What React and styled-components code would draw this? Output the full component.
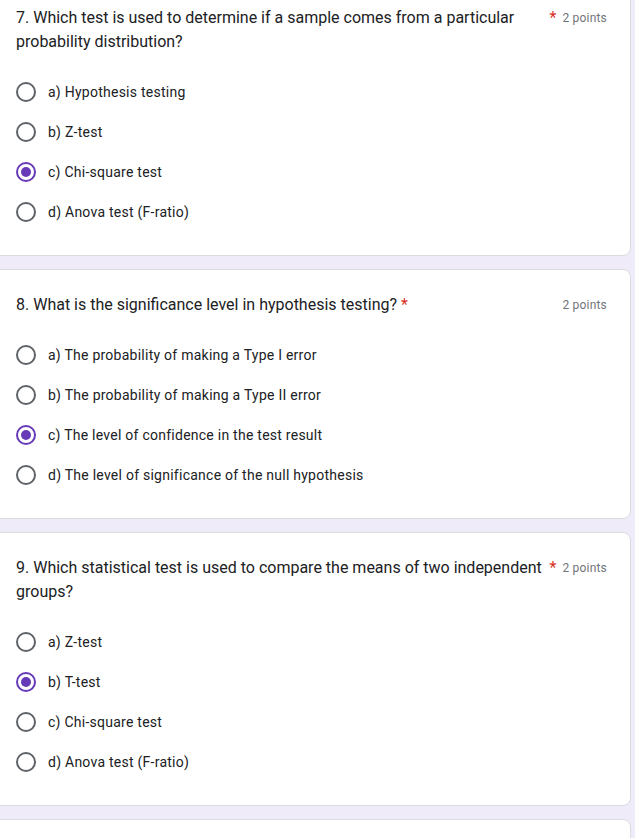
import React from "react";
import styled, { createGlobalStyle } from "styled-components";

const GlobalStyle = createGlobalStyle`
  html, body {
    margin: 0;
    padding: 0;
    background: #f0ebf8;
    overflow: hidden;
  }
  body {
    font-family: Roboto, "Liberation Sans", Arial, sans-serif;
    color: #202124;
  }
`;

const Page = styled.div`
  margin-top: -18px;
  padding-right: 4px;
  display: flex;
  flex-direction: column;
  gap: 13px;
`;

const Card = styled.div`
  margin-left: -10px;
  background: #fff;
  border: 1px solid #dadce0;
  border-radius: 8px;
  padding: 23px 23px 23px 25px;
  min-height: ${(p) => (p.$empty ? "60px" : "auto")};
`;

const Header = styled.div`
  display: flex;
  align-items: flex-start;
  margin-bottom: 18px;
`;

const TitleWrap = styled.div`
  display: flex;
  align-items: flex-start;
  flex: 0 1 auto;
  min-width: 0;
`;

const Title = styled.div`
  font-size: 16px;
  line-height: 24px;
  letter-spacing: 0;
  color: #202124;
`;

const Asterisk = styled.span`
  flex-shrink: 0;
  margin-left: 4px;
  font-size: 16px;
  line-height: 24px;
  color: #d93025;
`;

const Points = styled.span`
  flex-shrink: 0;
  margin-left: auto;
  padding-left: 6px;
  font-size: 12px;
  line-height: 24px;
  letter-spacing: 0.2px;
  color: #70757a;
  white-space: nowrap;
`;

const Options = styled.div`
  display: flex;
  flex-direction: column;
`;

const Option = styled.label`
  display: flex;
  align-items: center;
  gap: 12px;
  height: 40px;
  font-size: 14px;
  letter-spacing: 0.25px;
  color: #202124;
`;

const Radio = styled.span`
  box-sizing: border-box;
  width: 20px;
  height: 20px;
  border-radius: 50%;
  border: 2px solid ${(p) => (p.$checked ? "#673ab7" : "#5f6368")};
  display: flex;
  align-items: center;
  justify-content: center;
  flex-shrink: 0;

  &::after {
    content: "";
    width: 10px;
    height: 10px;
    border-radius: 50%;
    background: #673ab7;
    display: ${(p) => (p.$checked ? "block" : "none")};
  }
`;

const questions = [
  {
    title:
      "7. Which test is used to determine if a sample comes from a particular probability distribution?",
    options: [
      "a) Hypothesis testing",
      "b) Z-test",
      "c) Chi-square test",
      "d) Anova test (F-ratio)",
    ],
    checked: 2,
  },
  {
    title: "8. What is the significance level in hypothesis testing?",
    options: [
      "a) The probability of making a Type I error",
      "b) The probability of making a Type II error",
      "c) The level of confidence in the test result",
      "d) The level of significance of the null hypothesis",
    ],
    checked: 2,
  },
  {
    title:
      "9. Which statistical test is used to compare the means of two independent groups?",
    options: ["a) Z-test", "b) T-test", "c) Chi-square test", "d) Anova test (F-ratio)"],
    checked: 1,
  },
];

function Question({ q }) {
  return (
    <Card>
      <Header>
        <TitleWrap>
          <Title>{q.title}</Title>
          <Asterisk>*</Asterisk>
        </TitleWrap>
        <Points>2 points</Points>
      </Header>
      <Options>
        {q.options.map((opt, i) => (
          <Option key={opt}>
            <Radio $checked={i === q.checked} />
            {opt}
          </Option>
        ))}
      </Options>
    </Card>
  );
}

export default function App() {
  return (
    <>
      <GlobalStyle />
      <Page>
        {questions.map((q) => (
          <Question key={q.title} q={q} />
        ))}
        <Card $empty />
      </Page>
    </>
  );
}
